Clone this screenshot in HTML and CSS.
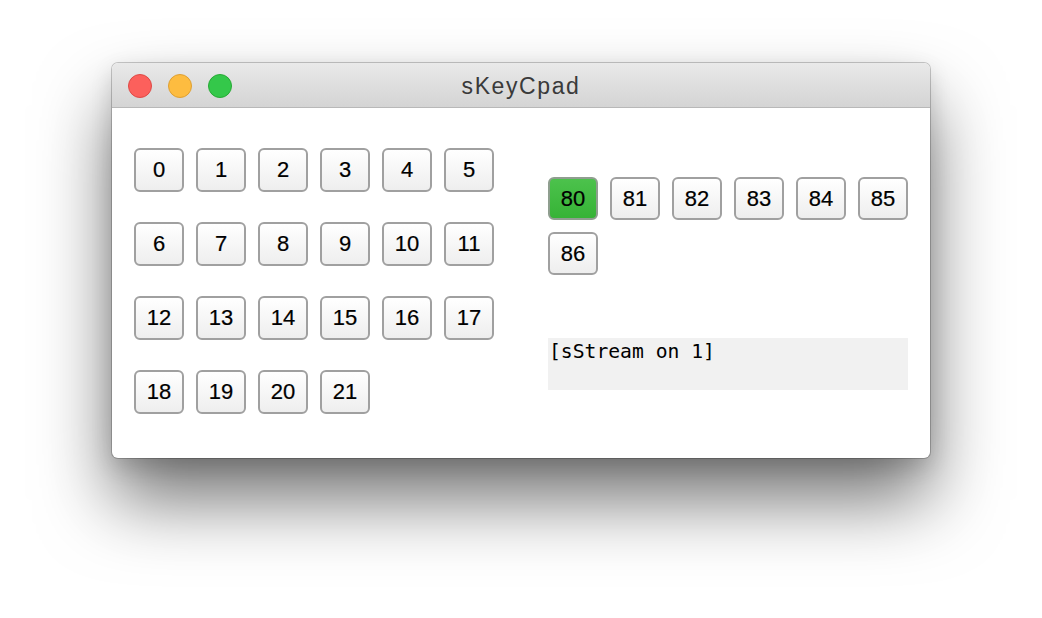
FILE: index.html
```html
<!DOCTYPE html>
<html>
<head>
<meta charset="utf-8">
<link rel="stylesheet" href="styles.css">
</head>
<body>
<div class="window">
  <div class="titlebar">
    <div class="lights">
      <span class="light red"></span>
      <span class="light yellow"></span>
      <span class="light green"></span>
    </div>
    <div class="title">sKeyCpad</div>
  </div>
  <div class="content">
    <div class="pad">
      <button class="key">0</button><button class="key">1</button><button class="key">2</button><button class="key">3</button><button class="key">4</button><button class="key">5</button>
      <button class="key">6</button><button class="key">7</button><button class="key">8</button><button class="key">9</button><button class="key">10</button><button class="key">11</button>
      <button class="key">12</button><button class="key">13</button><button class="key">14</button><button class="key">15</button><button class="key">16</button><button class="key">17</button>
      <button class="key">18</button><button class="key">19</button><button class="key">20</button><button class="key">21</button>
    </div>
    <div class="side">
      <div class="pad2">
        <button class="key on">80</button><button class="key">81</button><button class="key">82</button><button class="key">83</button><button class="key">84</button><button class="key">85</button>
        <button class="key">86</button>
      </div>
      <div class="post">[sStream on 1]</div>
    </div>
  </div>
</div>
</body>
</html>
```
FILE: styles.css
```css
html, body {
  margin: 0;
  padding: 0;
  background: #ffffff;
}
body {
  width: 1042px;
  height: 618px;
  overflow: hidden;
  font-family: "Liberation Sans", Arial, sans-serif;
}
.window {
  margin: 63px 0 0 112px;
  width: 818px;
  height: 395px;
  background: #ffffff;
  border-radius: 6px;
  box-shadow: 0 0 0 1px rgba(0,0,0,0.2), 0 42px 72px rgba(0,0,0,0.55), 0 8px 22px rgba(0,0,0,0.14);
  overflow: hidden;
  display: flex;
  flex-direction: column;
}
.titlebar {
  position: relative;
  height: 44px;
  flex: none;
  background: linear-gradient(#e9e9e9, #d4d4d4);
  border-bottom: 1px solid #b8b8b8;
  display: flex;
  align-items: center;
  justify-content: center;
}
.lights {
  position: absolute;
  left: 16px;
  top: 11px;
  display: flex;
  gap: 16px;
}
.light {
  width: 24px;
  height: 24px;
  border-radius: 50%;
  box-sizing: border-box;
}
.red { background: #fc605c; border: 1px solid #de4a46; }
.yellow { background: #fdbc40; border: 1px solid #dea033; }
.green { background: #34c84a; border: 1px solid #27aa35; }
.title {
  font-size: 23px;
  letter-spacing: 1.6px;
  color: #3a3a3a;
  padding-top: 2px;
}
.content {
  display: flex;
  padding: 40px 22px 0 22px;
  align-items: flex-start;
}
.pad {
  display: grid;
  grid-template-columns: repeat(6, 50px);
  column-gap: 12px;
  row-gap: 30px;
}
.key {
  width: 50px;
  height: 44px;
  box-sizing: border-box;
  margin: 0;
  padding: 0;
  border: 2px solid #a0a0a0;
  border-radius: 6px;
  background: linear-gradient(#ffffff, #eeeeee);
  font-family: "Liberation Sans", Arial, sans-serif;
  font-size: 22px;
  color: #000000;
  text-align: center;
  line-height: 40px;
  -webkit-text-stroke: 0.2px #000;
}
.key.on {
  background: linear-gradient(#4cc24c, #36b336);
  border-color: #8f9e8f;
}
.side {
  margin-left: 54px;
  padding-top: 29px;
  display: flex;
  flex-direction: column;
}
.pad2 {
  width: 360px;
  display: flex;
  flex-wrap: wrap;
  column-gap: 12px;
  row-gap: 12px;
}
.pad2 .key {
  height: 43px;
  line-height: 39px;
}
.post {
  margin-top: 63px;
  width: 360px;
  height: 52px;
  box-sizing: border-box;
  background: #f1f1f1;
  padding: 3px 0 0 1px;
  font-family: "DejaVu Sans Mono", "Liberation Mono", monospace;
  font-size: 19.7px;
  line-height: 22px;
  color: #000000;
}
```
